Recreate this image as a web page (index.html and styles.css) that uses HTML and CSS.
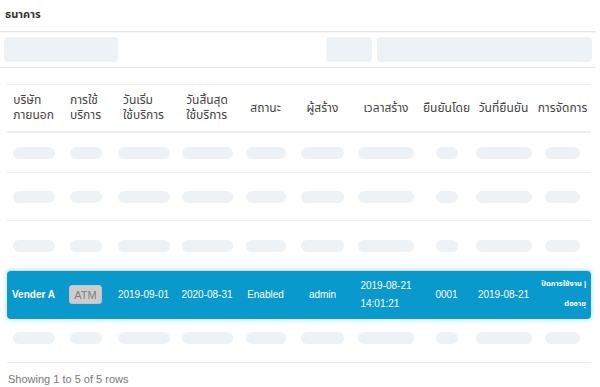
FILE: index.html
```html
<!DOCTYPE html>
<html lang="th">
<head>
<meta charset="utf-8">
<title>ธนาคาร</title>
<link rel="stylesheet" href="styles.css">
</head>
<body>
<div class="card">
  <div class="card-header">ธนาคาร</div>
  <div class="toolbar">
    <span class="sk-box sk-search"></span>
    <span class="spacer"></span>
    <span class="sk-box sk-btn"></span>
    <span class="sk-box sk-wide"></span>
  </div>
  <div class="table">
    <div class="row head">
      <div class="th">บริษัท<br>ภายนอก</div>
      <div class="th">การใช้<br>บริการ</div>
      <div class="th">วันเริ่ม<br>ใช้บริการ</div>
      <div class="th">วันสิ้นสุด<br>ใช้บริการ</div>
      <div class="th">สถานะ</div>
      <div class="th">ผู้สร้าง</div>
      <div class="th">เวลาสร้าง</div>
      <div class="th">ยืนยันโดย</div>
      <div class="th">วันที่ยืนยัน</div>
      <div class="th">การจัดการ</div>
    </div>
    <div class="row body r1">
      <span class="sk"></span><span class="sk"></span><span class="sk"></span><span class="sk"></span><span class="sk"></span>
      <span class="sk"></span><span class="sk"></span><span class="sk"></span><span class="sk"></span><span class="sk"></span>
    </div>
    <div class="row body r2">
      <span class="sk"></span><span class="sk"></span><span class="sk"></span><span class="sk"></span><span class="sk"></span>
      <span class="sk"></span><span class="sk"></span><span class="sk"></span><span class="sk"></span><span class="sk"></span>
    </div>
    <div class="row body r3">
      <span class="sk"></span><span class="sk"></span><span class="sk"></span><span class="sk"></span><span class="sk"></span>
      <span class="sk"></span><span class="sk"></span><span class="sk"></span><span class="sk"></span><span class="sk"></span>
    </div>
    <div class="row active">
      <div class="td strong">Vender A</div>
      <div class="td"><span class="badge">ATM</span></div>
      <div class="td">2019-09-01</div>
      <div class="td">2020-08-31</div>
      <div class="td">Enabled</div>
      <div class="td">admin</div>
      <div class="td left">2019-08-21<br>14:01:21</div>
      <div class="td">0001</div>
      <div class="td">2019-08-21</div>
      <div class="td actions"><span>ปิดการใช้งาน |</span><span>ต่ออายุ</span></div>
    </div>
    <div class="row body r5">
      <span class="sk"></span><span class="sk"></span><span class="sk"></span><span class="sk"></span><span class="sk"></span>
      <span class="sk"></span><span class="sk"></span><span class="sk"></span><span class="sk"></span><span class="sk"></span>
    </div>
  </div>
  <div class="footer">Showing 1 to 5 of 5 rows</div>
</div>
</body>
</html>
```
FILE: styles.css
```css
* { box-sizing: border-box; }
html, body { margin: 0; padding: 0; background: #fff; }
body {
  font-family: "Liberation Sans", "Noto Sans Thai", "Noto Sans", sans-serif;
  color: #444;
}
.card { width: 596px; }
.card-header {
  height: 32px;
  padding: 6px 0 0 5px;
  font-size: 11px;
  font-weight: bold;
  color: #333;
  border-bottom: 1px solid #e6e6e6;
  box-shadow: 0 1px 1px rgba(0,0,0,0.03);
}
.toolbar {
  display: flex;
  align-items: center;
  gap: 5px;
  padding: 5px 4px 5px 4px;
  height: 36px;
  border-bottom: 1px solid #e6e6e6;
}
.spacer { flex: 1; }
.sk-box { display: block; height: 25px; background: #edf2f7; border-radius: 4px; }
.sk-search { width: 114px; }
.sk-btn { width: 46px; }
.sk-wide { width: 215px; }

.table { margin: 16px 5px 0 7px; width: 584px; }
.row {
  display: grid;
  grid-template-columns: 53px 51px 65px 62px 55px 59px 68px 53px 61px 57px;
  align-items: center;
  justify-items: center;
  border-bottom: 1px solid #ececec;
}
.head {
  height: 49px;
  border-top: 1px solid #ececec;
  border-bottom: 2px solid #efefef;
}
.th {
  font-size: 12px;
  line-height: 15px;
  color: #444;
  text-align: left;
  white-space: nowrap;
}
.r1 { height: 40px; }
.r2 { height: 48px; }
.r3 { height: 50px; }
.r5 { height: 44px; }
.sk { display: block; height: 12px; border-radius: 6px; background: #edf2f7; }
.sk:nth-child(1) { width: 42px; }
.sk:nth-child(2) { width: 32px; }
.sk:nth-child(3) { width: 52px; }
.sk:nth-child(4) { width: 51px; }
.sk:nth-child(5) { width: 40px; }
.sk:nth-child(6) { width: 43px; }
.sk:nth-child(7) { width: 56px; }
.sk:nth-child(8) { width: 22px; }
.sk:nth-child(9) { width: 56px; }
.sk:nth-child(10) { width: 35px; }
.r5 .sk { margin-top: -6px; }

.active {
  height: 48px;
  background: #0a99cc;
  border-radius: 4px;
  border-bottom: none;
  box-shadow: 0 0 5px 1px rgba(10,153,204,0.25);
  color: #fff;
}
.td { font-size: 10px; line-height: 18px; color: #fff; white-space: nowrap; }
.td.strong { font-weight: bold; }
.td.left { text-align: left; }
.badge {
  display: inline-block;
  width: 33px;
  height: 19px;
  line-height: 19px;
  text-align: center;
  font-size: 11px;
  color: #808080;
  background: #cdcdcd;
  border: 1px solid #c2c2c2;
  border-radius: 3px;
}
.actions {
  justify-self: end;
  padding-right: 5px;
  display: flex;
  flex-direction: column;
  align-items: flex-end;
  font-size: 7.5px;
  font-weight: bold;
  line-height: 20px;
  margin-top: -2px;
}
.footer {
  padding: 10px 0 0 8px;
  font-size: 11px;
  color: #777;
}
```
